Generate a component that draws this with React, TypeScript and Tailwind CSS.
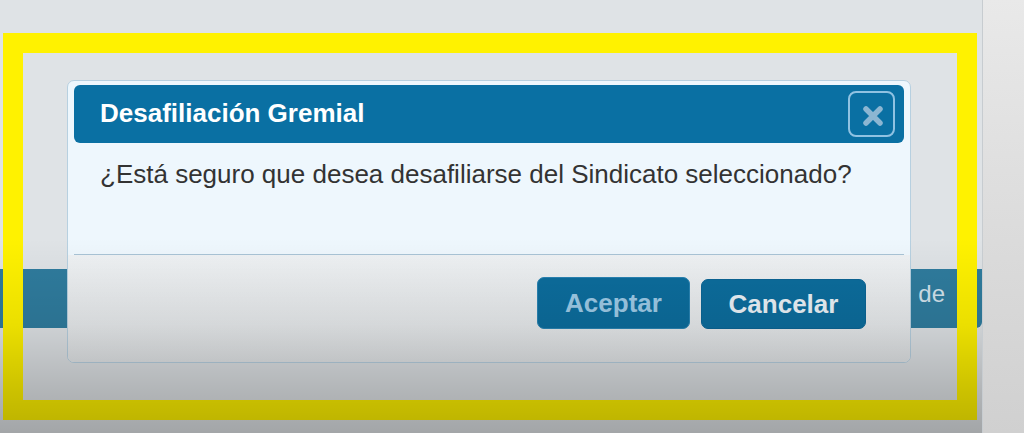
import React from 'react';

const CloseIcon: React.FC = () => (
  <svg width="24" height="24" viewBox="0 0 24 24" fill="none">
    <path d="M5 5 L19 19 M19 5 L5 19" stroke="#8cb6d2" strokeWidth="5.5" strokeLinecap="round" />
  </svg>
);

const ConfirmDialog: React.FC = () => {
  return (
    <div className="absolute left-[67px] top-[80px] flex h-[283px] w-[844px] flex-col overflow-hidden rounded-[7px] border border-[#b7d0e0] bg-[#eef7fd]">
      <div className="h-[173px] px-[6px] pt-[4px]">
        <div className="flex h-[58px] items-center justify-between rounded-[6px] bg-[#0a70a3] pl-[26px] pr-[9px]">
          <h2 className="-mt-[2px] text-[26px] font-bold leading-none text-white">Desafiliación Gremial</h2>
          <button className="flex h-[46px] w-[47px] items-center justify-center rounded-[8px] border-2 border-[#8fc2e2] pl-[3px] pt-[4px]">
            <CloseIcon />
          </button>
        </div>
        <p className="pl-[26px] pt-[18px] text-[26px] leading-none text-[#333333]">
          ¿Está seguro que desea desafiliarse del Sindicato seleccionado?
        </p>
      </div>
      <div className="mx-[6px] h-px bg-[#a9c4d6]" />
      <div className="flex flex-1 items-start justify-end gap-[11px] bg-gradient-to-b from-[#eff2f4] to-[#e3e6e8] pr-[44px] pt-[22px]">
        <button className="h-[52px] w-[153px] rounded-[7px] border border-[#2a84b3] bg-[#0c6d9d] text-[26px] font-bold leading-none text-[#9dcae6]">
          Aceptar
        </button>
        <button className="mt-[2px] h-[50px] w-[165px] rounded-[7px] border border-[#0b6595] bg-[#0c6d9d] text-[26px] font-bold leading-none text-[#eaf2f7]">
          Cancelar
        </button>
      </div>
    </div>
  );
};

const App: React.FC = () => {
  return (
    <div className="flex h-[433px] w-[1024px] overflow-hidden font-['Liberation_Sans',Arial,sans-serif]">
      <div className="relative w-[982px] bg-[#dfe3e6]">
        {/* page content behind the modal */}
        <div className="mt-[269px] flex h-[59px] items-start justify-end rounded-br-[6px] bg-[#2f7c9e] pr-[37px] pt-[13px] text-[24px] leading-none text-[#d3e3ec]">
          de
        </div>

        <ConfirmDialog />

        {/* highlight frame */}
        <div className="pointer-events-none absolute left-[3px] top-[33px] h-[387px] w-[974px] border-[20px] border-[#fff200]" />

        {/* bottom shading */}
        <div className="pointer-events-none absolute inset-0 bg-[linear-gradient(to_bottom,transparent_0%,transparent_55%,rgba(0,0,0,0.08)_75%,rgba(0,0,0,0.2)_90%,rgba(0,0,0,0.27)_100%)]" />
      </div>
      <div className="flex-1 border-l border-[#c7ccd0] bg-gradient-to-b from-[#e9e9e9] to-[#d0d0d0]" />
    </div>
  );
};

export default App;
